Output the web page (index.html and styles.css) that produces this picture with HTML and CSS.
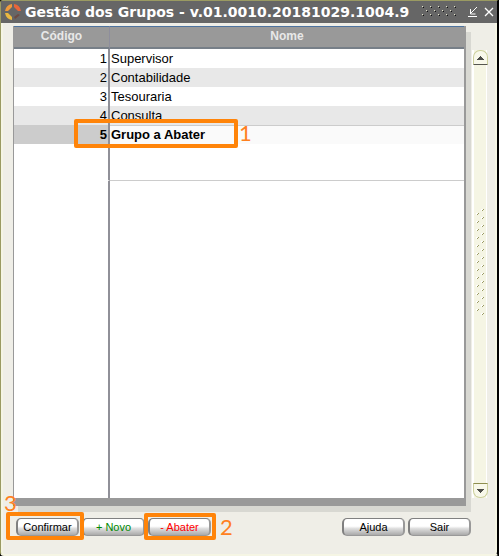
FILE: index.html
```html
<!DOCTYPE html>
<html lang="pt">
<head>
<meta charset="utf-8">
<title>Gestão dos Grupos</title>
<link rel="stylesheet" href="styles.css">
</head>
<body>
<main class="window">
  <header class="titlebar">
    <svg class="logo" viewBox="0 0 16 16" aria-hidden="true">
      <path d="M7 0V3L3 7H0Q1 1 7 0Z" fill="#ef9a3c"/>
      <path d="M9 0Q15 1 16 7H13L9 3Z" fill="#e8653a"/>
      <path d="M0 9H3L7 13V16Q1 15 0 9Z" fill="#e9b840"/>
      <path d="M13 10 15 11 10 15 9 13Z" fill="#6d4b43"/>
    </svg>
    <h1 class="title">Gestão dos Grupos - v.01.0010.20181029.1004.9</h1>
    <svg class="grip" viewBox="0 0 36 12" aria-hidden="true">
      <defs>
        <pattern id="grip-dots" width="8" height="8" patternUnits="userSpaceOnUse">
          <path d="M0 0h1v1h-1zM4 4h1v1h-1z" fill="#e4e4cc"/>
          <path d="M1 1h1v1h-1zM5 5h1v1h-1z" fill="#111"/>
        </pattern>
      </defs>
      <rect width="36" height="12" fill="url(#grip-dots)"/>
    </svg>
    <button class="win-btn" type="button" aria-label="Minimizar">
      <svg viewBox="0 0 10 12"><path d="M9 1 3 7M2.500 3v5h5M0 10.500h9" fill="none" stroke="#fff"/></svg>
    </button>
    <button class="win-btn" type="button" aria-label="Fechar">
      <svg viewBox="0 0 10 12"><path d="M1 2 9 10M9 2 1 10" fill="none" stroke="#fff" stroke-width="1.300"/></svg>
    </button>
  </header>

  <div class="content">
    <section class="grid-panel">
      <table class="groups">
        <thead>
          <tr><th class="code" scope="col">Código</th><th scope="col">Nome</th></tr>
        </thead>
        <tbody>
          <tr><td class="code">1</td><td>Supervisor</td></tr>
          <tr><td class="code">2</td><td>Contabilidade</td></tr>
          <tr><td class="code">3</td><td>Tesouraria</td></tr>
          <tr><td class="code">4</td><td>Consulta</td></tr>
          <tr class="selected"><td class="code">5</td><td class="anchor">Grupo a Abater<span class="mark mark-row"></span><span class="step step-row">1</span></td></tr>
          <tr class="blank"><td class="code"></td><td></td></tr>
        </tbody>
      </table>
      <div class="filler"><div class="filler-code"></div></div>
    </section>
    <div class="scrollbar">
      <button class="scroll-btn up" type="button" aria-label="Subir"><svg viewBox="0 0 7 4"><path d="M0 4h7V3H6V2H5V1H4V0H3v1H2v1H1v1H0z" fill="#4c4c48"/></svg></button>
      <svg class="thumb" viewBox="0 0 8 107" aria-hidden="true">
        <defs>
          <pattern id="thumb-dots" width="8" height="8" patternUnits="userSpaceOnUse">
            <path d="M5 0h2v1h-1v1h-1zM0 4h2v1h-1v1h-1z" fill="#fff"/>
            <path d="M7 0h1v1h-1v1h-1v-1h1zM2 4h1v1h-1v1h-1v-1h1z" fill="#9a9a62"/>
          </pattern>
        </defs>
        <rect width="8" height="107" fill="url(#thumb-dots)"/>
      </svg>
      <button class="scroll-btn down" type="button" aria-label="Descer"><svg viewBox="0 0 7 4"><path d="M0 0h7v1H6v1H5v1H4v1H3V3H2V2H1V1H0z" fill="#4c4c48"/></svg></button>
    </div>
  </div>

  <footer class="actions">
    <div class="anchor">
      <button class="btn" type="button">Confirmar</button>
      <span class="mark mark-confirm"></span><span class="step step-confirm">3</span>
    </div>
    <button class="btn new" type="button">+ Novo</button>
    <div class="anchor">
      <button class="btn remove" type="button">- Abater</button>
      <span class="mark mark-remove"></span><span class="step step-remove">2</span>
    </div>
    <button class="btn help" type="button">Ajuda</button>
    <button class="btn" type="button">Sair</button>
  </footer>
</main>
</body>
</html>
```
FILE: styles.css
```css
* { box-sizing: border-box; }

body {
  margin: 0;
  background: #000;
  font: 13px/18px "Liberation Sans", Arial, sans-serif;
  color: #000;
}

button { padding: 0; border: 0; background: none; font: inherit; color: inherit; }

.window {
  display: flex;
  flex-direction: column;
  min-height: 100vh;
  border: 1px solid #9a9a62;
  border-right: 2px solid #000;
  border-bottom: 2px solid #f5f5e4;
  border-radius: 3px 3px 4px 4px;
  background: #efeee7;
  box-shadow: inset 2px 0 #f5f5e4, inset -2px 0 #f5f5e4;
}

.titlebar {
  display: flex;
  align-items: center;
  gap: 6px;
  height: 22px;
  padding: 0 3px 0 4px;
  background: #666;
}

.logo { width: 16px; height: 16px; flex: none; }

.title {
  flex: 1;
  margin: 0;
  margin-left: -2px;
  font: bold 14px/22px "DejaVu Sans", Verdana, sans-serif;
  color: #fff;
  white-space: nowrap;
}

.grip { width: 36px; height: 12px; flex: none; margin-right: 4px; }
.win-btn { width: 10px; height: 12px; flex: none; }
.win-btn svg { display: block; width: 10px; height: 12px; }

.content {
  flex: 1;
  display: flex;
  gap: 6px;
  padding: 3px 10px 0 12px;
}

.grid-panel {
  flex: 1;
  display: flex;
  flex-direction: column;
  border: solid #999;
  border-width: 0 2px 8px 1px;
  background: #fff;
  box-shadow: 5px 6px #d8d8d2;
}

.groups {
  width: 100%;
  table-layout: fixed;
  border-collapse: separate;
  border-spacing: 0;
}

.groups thead { box-shadow: -1px 0 #999, 2px 0 #999; background: #999; }

.groups th {
  height: 23px;
  padding: 0 0 2px;
  border: solid #4d739f;
  border-width: 1px 0 2px;
  border-bottom-color: #777f88;
  font-weight: bold;
  font-size: 12px;
  color: #e8e8e8;
}

.groups th.code { border-right: 1px solid #8e8e9c; }
.groups .code { width: 96px; }

.groups td { height: 19px; padding: 0 1px; }
.groups td.code { padding: 0 1px; border-right: 2px solid #909098; text-align: right; }
.groups tbody tr:nth-child(even) { background: #e8e8e8; }
.groups tbody tr.selected { background: #fafafa; font-weight: bold; }
.groups .selected td.code { background: #ccc; }
.groups .selected td.anchor { box-shadow: inset 0 1px #ccc; }
.groups tbody tr.blank { background: #fff; }
.groups .blank td { height: 37px; border-bottom: 1px solid #ccc; }
.groups .blank td.code { border-bottom-color: #fff; }

.filler { flex: 1; display: flex; }
.filler-code { width: 96px; border-right: 2px solid #909098; }

.scrollbar {
  display: flex;
  flex-direction: column;
  justify-content: space-between;
  align-items: center;
  width: 15px;
  margin: 24px 0 8px;
  border: solid #fff;
  border-width: 0 1px 0 2px;
  background: #f5f5e4;
}

.scroll-btn {
  display: flex;
  align-items: center;
  justify-content: center;
  width: 15px;
  height: 15px;
  border: 1px solid #cdd09c;
  background: #f8f8ea;
}

.scroll-btn svg { width: 7px; height: 4px; }
.scroll-btn.up { border-bottom: 1px solid #55554f; border-radius: 7px 7px 0 0; }
.scroll-btn.down { border-top: 1px solid #8e8e50; border-radius: 0 0 7px 7px; }
.thumb { width: 8px; height: 107px; margin-bottom: 24px; }

.actions {
  display: flex;
  gap: 3px;
  padding: 12px 26px 18px 15px;
}

.anchor { position: relative; }

.btn {
  display: block;
  width: 63px;
  height: 18px;
  border: solid #808080;
  border-width: 1px 2px;
  border-color: #808080 #999 #999 #808080;
  border-radius: 5px;
  background: linear-gradient(#fff 45%, #ddd 60%, #aaa);
  font-size: 11px;
  line-height: 15px;
}

.btn.new { color: #080; }
.btn.remove { color: #f00; }
.btn.help { margin-left: auto; }

.mark {
  position: absolute;
  border: 4px solid #ff8409;
  border-radius: 2px;
  pointer-events: none;
}

.mark-row { left: -36px; top: -6px; width: 164px; height: 29px; }
.mark-confirm { left: -10px; top: -6px; width: 78px; height: 28px; }
.mark-remove { left: -4px; top: -5px; width: 72px; height: 27px; }

.step {
  position: absolute;
  font: 22px/24px Lato, sans-serif;
  color: #ff8020;
}

.step-row { left: 129px; top: -4px; }
.step-confirm { left: -12px; top: -27px; }
.step-remove { left: 72px; top: -3px; }
```
